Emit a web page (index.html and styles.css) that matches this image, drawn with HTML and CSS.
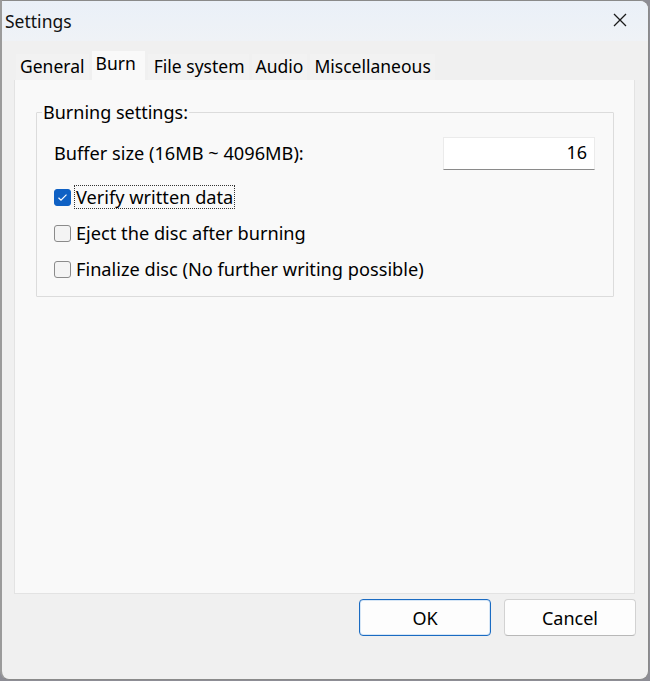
FILE: index.html
```html
<!DOCTYPE html>
<html>
<head>
<meta charset="utf-8">
<link rel="stylesheet" href="styles.css">
</head>
<body>
<div class="window">
  <div class="titlebar">
    <span class="title">Settings</span>
    <span class="close">
      <svg width="14" height="14" viewBox="0 0 14 14"><path d="M1 1 L13 13 M13 1 L1 13" stroke="#1a1a1a" stroke-width="1.3" fill="none"/></svg>
    </span>
  </div>
  <div class="client">
    <div class="tabs">
      <div class="tab">General</div>
      <div class="tab active">Burn</div>
      <div class="tab">File system</div>
      <div class="tab">Audio</div>
      <div class="tab">Miscellaneous</div>
    </div>
    <div class="panel">
      <fieldset class="group">
        <legend>Burning settings:</legend>
        <div class="row buffer">
          <span>Buffer size (16MB ~ 4096MB):</span>
          <div class="input">16</div>
        </div>
        <div class="row check">
          <span class="box checked"><svg width="11" height="9" viewBox="0 0 11 9"><path d="M1.5 4.8 L4 7.2 L9.5 1.6" stroke="#fff" stroke-width="1.2" fill="none"/></svg></span>
          <span class="label focus">Verify written data</span>
        </div>
        <div class="row check">
          <span class="box"></span>
          <span class="label">Eject the disc after burning</span>
        </div>
        <div class="row check">
          <span class="box"></span>
          <span class="label">Finalize disc (No further writing possible)</span>
        </div>
      </fieldset>
    </div>
    <div class="buttons">
      <div class="btn default">OK</div>
      <div class="btn">Cancel</div>
    </div>
  </div>
</div>
</body>
</html>
```
FILE: styles.css
```css
html, body {
  margin: 0;
  padding: 0;
  width: 650px;
  height: 681px;
  background: #8d8d95;
  overflow: hidden;
}
body {
  font-family: "Noto Sans", "Open Sans", sans-serif;
  font-size: 18px;
  color: #000;
}
.window {
  box-sizing: border-box;
  width: 649px;
  height: 680px;
  border: 1px solid #8a8a8a;
  border-left: 2px solid #9b9b9b;
  border-radius: 0 9px 9px 9px;
  background: #f0f0f0;
  overflow: hidden;
  display: flex;
  flex-direction: column;
}
.titlebar {
  height: 40px;
  flex: none;
  display: flex;
  align-items: center;
  justify-content: space-between;
  background: linear-gradient(#eaf0f8, #eff2f6);
}
.title {
  padding-left: 3px;
  font-size: 17.5px;
  margin-top: -1px;
  color: #111;
}
.close {
  width: 46px;
  display: flex;
  justify-content: center;
  margin-right: 5px;
  margin-top: -2px;
}
.client {
  flex: 1;
  display: flex;
  flex-direction: column;
  padding: 10px 13px 0 12px;
}
.tabs {
  display: flex;
  align-items: flex-end;
  height: 29px;
  padding-left: 2px;
  gap: 3px;
}
.tab {
  height: 26px;
  line-height: 25px;
  padding: 0 4px;
  background: #f2f2f2;
  font-size: 17.5px;
}
.tab.active {
  height: 29px;
  line-height: 25px;
  background: #f9f9f9;
  padding: 0 9px 0 4px;
}
.tab.active + .tab {
  padding-left: 6px;
}
.panel {
  height: 514px;
  flex: none;
  background: #f9f9f9;
  border: 1px solid #e3e3e3;
  border-top: none;
  box-sizing: border-box;
  padding: 22px 20px 0 21px;
}
.group {
  margin: 0;
  padding: 0 0 0 17px;
  height: 195px;
  box-sizing: border-box;
  border: 1px solid #dcdcdc;
  border-radius: 1px;
}
.group legend {
  padding: 0 1px;
  margin-left: -12px;
  font-size: 18px;
  line-height: 20px;
}
.row {
  display: flex;
  align-items: center;
}
.buffer {
  justify-content: space-between;
  margin-top: 14px;
  padding-right: 18px;
  height: 34px;
}
.buffer span {
  font-size: 18.2px;
}
.input {
  width: 152px;
  height: 33px;
  box-sizing: border-box;
  background: #fff;
  border: 1px solid #ebebeb;
  border-bottom: 1px solid #8a8a8a;
  text-align: right;
  padding-right: 7px;
  line-height: 29px;
  font-size: 18px;
}
.check {
  height: 36px;
}
.buffer + .check {
  margin-top: 9px;
}
.box {
  width: 17px;
  height: 17px;
  box-sizing: border-box;
  border: 1px solid #8b8b8b;
  border-radius: 3px;
  background: #f4f4f4;
  margin-right: 4px;
  display: flex;
  align-items: center;
  justify-content: center;
}
.box.checked {
  background: #0f61c4;
  border-color: #0f61c4;
}
.label {
  font-size: 18.2px;
  line-height: 22px;
  padding: 0 1px;
}
.label.focus {
  outline: 1px dotted #333;
}
.buttons {
  display: flex;
  justify-content: flex-end;
  gap: 13px;
  margin-top: 5px;
  margin-right: -1px;
}
.btn {
  width: 132px;
  height: 37px;
  box-sizing: border-box;
  background: #fdfdfd;
  border: 1px solid #d2d2d2;
  border-bottom-color: #b8b8b8;
  border-radius: 4px;
  display: flex;
  align-items: center;
  justify-content: center;
  font-size: 18px;
}
.btn.default {
  border: 1px solid #1a6bc2;
  box-shadow: inset 0 0 0 1px #d6e6f6;
}
```
